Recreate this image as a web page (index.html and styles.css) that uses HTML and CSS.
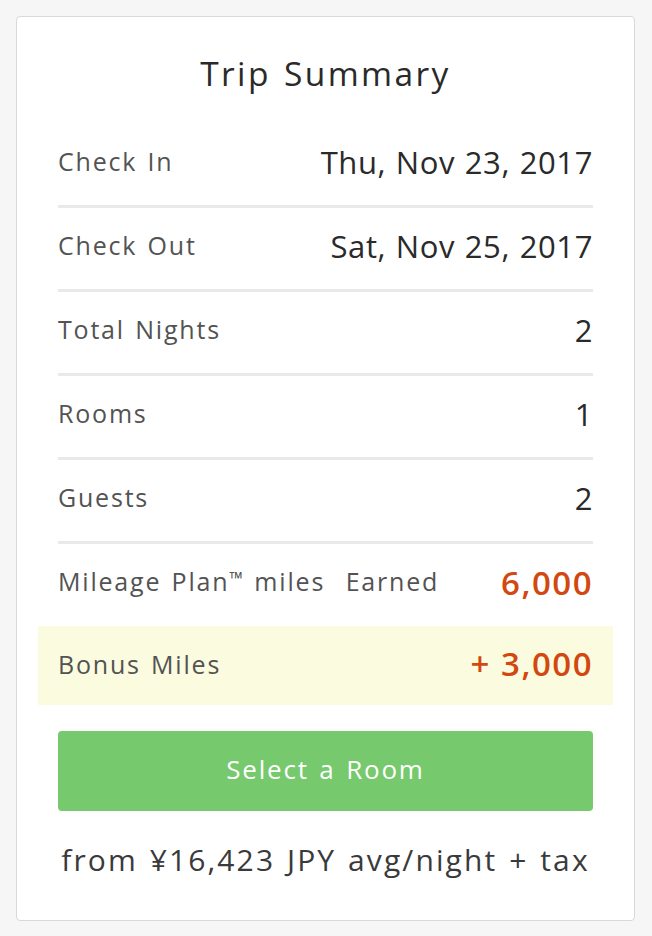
FILE: index.html
```html
<!DOCTYPE html>
<html>
<head>
<meta charset="utf-8">
<link rel="stylesheet" href="styles.css">
</head>
<body>
<div class="card">
  <h1 class="title">Trip Summary</h1>
  <div class="rows">
    <div class="row"><span class="label">Check In</span><span class="value">Thu, Nov 23, 2017</span></div>
    <div class="row"><span class="label">Check Out</span><span class="value">Sat, Nov 25, 2017</span></div>
    <div class="row"><span class="label">Total Nights</span><span class="value">2</span></div>
    <div class="row"><span class="label">Rooms</span><span class="value">1</span></div>
    <div class="row"><span class="label">Guests</span><span class="value">2</span></div>
    <div class="row row-plain"><span class="label">Mileage Plan<span class="tm">™</span> miles&nbsp; Earned</span><span class="value miles">6,000</span></div>
    <div class="row row-bonus"><span class="label">Bonus Miles</span><span class="value miles">+ 3,000</span></div>
  </div>
  <button class="cta">Select a Room</button>
  <p class="price">from ¥16,423 JPY avg/night + tax</p>
</div>
</body>
</html>
```
FILE: styles.css
```css
html, body {
  margin: 0;
  padding: 0;
  background: #f6f6f6;
}
body {
  padding: 16px 17px 16px 16px;
  font-family: "Open Sans", Lato, sans-serif;
}
.card {
  background: #fff;
  border: 1px solid #d9d9d9;
  border-radius: 4px;
  padding: 0 41px;
  height: 905px;
  box-sizing: border-box;
}
.title {
  margin: 0;
  padding-top: 34px;
  height: 107px;
  box-sizing: border-box;
  text-align: center;
  font-weight: 400;
  font-size: 33.5px;
  letter-spacing: 2.4px;
  word-spacing: 2px;
  color: #2a2a2a;
  line-height: 44px;
}
.rows {
  display: flex;
  flex-direction: column;
}
.row {
  display: flex;
  justify-content: space-between;
  align-items: center;
  height: 81px;
  border-bottom: 3px solid #e9e9e9;
}
.label {
  font-size: 25px;
  letter-spacing: 1.8px;
  word-spacing: 2px;
  color: #535353;
  margin-top: -8px;
  white-space: nowrap;
}
.tm {
  font-size: 0.72em;
  vertical-align: 0.35em;
  letter-spacing: 0;
  margin-right: 1px;
}
.value {
  font-size: 31px;
  letter-spacing: 0.6px;
  word-spacing: 1px;
  color: #2a2a2a;
  margin-top: -6px;
}
.row-plain {
  border-bottom: none;
  height: 82px;
}
.miles {
  color: #d2480f;
  font-weight: 600;
  font-size: 33px;
  letter-spacing: 1.5px;
  word-spacing: 0;
}
.row-bonus {
  border-bottom: none;
  margin: 0 -20px;
  padding: 0 20px;
  height: 79px;
  background: #fbfbdf;
}
.row-bonus .label, .row-bonus .value { margin-top: -4px; }
.cta {
  display: block;
  width: 100%;
  height: 80px;
  margin-top: 26px;
  border: none;
  border-radius: 4px;
  background: #76c96c;
  color: #fff;
  font-family: inherit;
  font-size: 26px;
  letter-spacing: 1.8px;
  word-spacing: 2px;
  padding-bottom: 6px;
}
.price {
  margin: 28px 0 0;
  text-align: center;
  font-size: 30px;
  letter-spacing: 2.1px;
  word-spacing: 2px;
  color: #3a3a3a;
  white-space: nowrap;
}
```
